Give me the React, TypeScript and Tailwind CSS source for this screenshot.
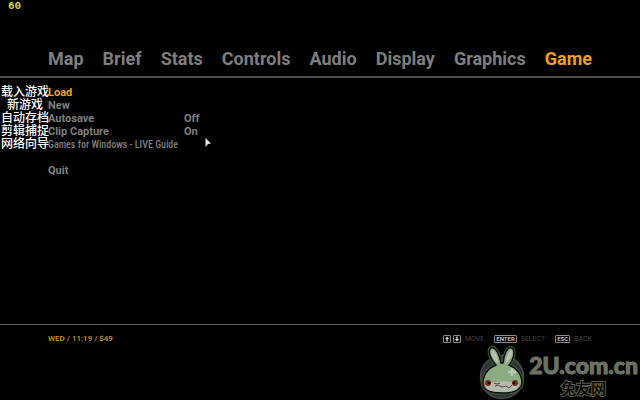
import React from "react";
import clsx from "clsx";

interface IMenuItem {
    label: string;
    note?: string;
    value?: string;
    active?: boolean;
    narrow?: boolean;
    spaced?: boolean;
}

const tabs = ["Map", "Brief", "Stats", "Controls", "Audio", "Display", "Graphics", "Game"];

const menuItems: IMenuItem[] = [
    { label: "Load", note: "载入游戏", active: true },
    { label: "New", note: "新游戏" },
    { label: "Autosave", note: "自动存档", value: "Off" },
    { label: "Clip Capture", note: "剪辑捕捉", value: "On" },
    { label: "Games for Windows - LIVE Guide", note: "网络向导", narrow: true },
    { label: "Quit", spaced: true },
];

const TabBar = () => (
    <nav className="flex justify-between border-b-2 border-[#4c4c4c] px-12 pb-[3px]">
        {tabs.map((tab) => (
            <button
                key={tab}
                type="button"
                className={clsx(
                    "font-['Roboto',sans-serif] text-[18px] leading-7 font-bold",
                    tab === "Game" ? "text-[#f0a01c]" : "text-[#7e7e7e]"
                )}
            >
                {tab}
            </button>
        ))}
    </nav>
);

const Menu = () => (
    <ul className="pt-2 font-['Roboto',sans-serif] leading-[13px]">
        {menuItems.map(({ label, note, value, active, narrow, spaced }) => (
            <li key={label} className={clsx("relative flex h-[13px] px-12", spaced && "mt-[13px]")}>
                <button
                    type="button"
                    className={clsx(
                        "flex text-left whitespace-nowrap",
                        active ? "text-[#f0a01c]" : "text-[#7e7e7e]",
                        narrow
                            ? "font-['Roboto_Condensed','Roboto',sans-serif] text-[10px] font-medium"
                            : "text-[11px] font-bold"
                    )}
                >
                    <span className={clsx(!narrow && "w-[136px]")}>{label}</span>
                    {value && <span>{value}</span>}
                </button>
                {note && (
                    <span className="pointer-events-none absolute top-0 left-0 w-[50px] text-center font-['Noto_Sans_CJK_SC',sans-serif] text-[12px] leading-[9px] font-medium whitespace-nowrap text-white">
                        {note}
                    </span>
                )}
            </li>
        ))}
    </ul>
);

const Key = ({ children }: { children: React.ReactNode }) => (
    <kbd className="flex h-2 items-center justify-center rounded-[1px] border border-[#8a8a8a] px-px font-['Roboto',sans-serif] text-[6px] leading-none font-medium text-[#dddddd]">
        {children}
    </kbd>
);

const Arrow = ({ down }: { down?: boolean }) => (
    <svg viewBox="0 0 5 6" className={clsx("h-1.5 w-1", down && "rotate-180")} aria-hidden="true">
        <path d="M2.5 0 5 3H3.3V6H1.7V3H0Z" fill="#dddddd" />
    </svg>
);

const StatusBar = () => (
    <footer className="flex h-[76px] items-start justify-between border-t border-[#5a5a5a] px-12 pt-2.5 font-['Roboto',sans-serif] text-[7px] leading-2">
        <p className="text-[8px] font-medium text-[#d0952c]">WED / 11:19 / $49</p>
        <div className="flex gap-2.5 text-[#444444]">
            <button type="button" className="flex gap-0.5">
                <Key><Arrow /></Key>
                <Key><Arrow down /></Key>
                <span className="pl-0.5">MOVE</span>
            </button>
            <button type="button" className="flex gap-1">
                <Key>ENTER</Key>
                SELECT
            </button>
            <button type="button" className="flex gap-1">
                <Key>ESC</Key>
                BACK
            </button>
        </div>
    </footer>
);

const Rabbit = () => (
    <svg viewBox="0 0 46 54" className="h-[54px] w-[46px]" aria-hidden="true">
        <circle cx="23" cy="31" r="21.5" fill="#2b3538" stroke="#474b43" strokeWidth="1.5" />
        <path
            d="M17 19C12 14 8 5 12 2c5-2 9 8 10 15h2C25 9 28 0 33 2c4 3 1 13-3 17 8 3 13 10 13 18-1 8-9 10-20 10S4 45 4 37c0-8 5-15 13-18Z"
            fill="#8cab82"
            stroke="#3f5639"
            strokeWidth="3.5"
        />
        <path
            d="M17 19C12 14 8 5 12 2c5-2 9 8 10 15h2C25 9 28 0 33 2c4 3 1 13-3 17 8 3 13 10 13 18-1 8-9 10-20 10S4 45 4 37c0-8 5-15 13-18Z"
            fill="#8cab82"
            stroke="#0d120c"
            strokeWidth="1.5"
        />
        <path d="M19 17c-5-3-8-10-6-13 4 1 6 8 6 13ZM27 17c0-6 2-12 6-13 1 4-1 10-6 13Z" fill="#b9c1b2" />
        <path d="M6 39c5-3 9-2 11-3 4-1 9-1 13 0 3 0 7 0 10 3 0 5-7 7-17 7S6 44 6 39Z" fill="#b4bbae" />
        <path d="M33 22v8M29 26h8" stroke="#bccbb5" strokeWidth="2.5" />
        <circle cx="9" cy="37" r="3" fill="#7c2621" />
        <circle cx="36" cy="37" r="3" fill="#7c2621" />
        <circle cx="10" cy="37" r="1.3" fill="#140808" />
        <circle cx="35" cy="37" r="1.3" fill="#140808" />
        <path d="M15 37l3 1 3-1M16 40l3-1 4 2 4-1 3 2 3-3" fill="none" stroke="#3a2c2a" strokeWidth="0.8" />
    </svg>
);

const Watermark = () => (
    <a href="#2u" className="absolute right-0.5 bottom-0 flex items-end">
        <Rabbit />
        <span className="flex flex-col items-center pb-0.5 pl-1">
            <span className="font-['Lato',sans-serif] text-[23px] leading-[26px] font-black text-[#6a7363] [-webkit-text-stroke:1px_#6a7363]">
                2U.com.cn
            </span>
            <span className="font-['Noto_Sans_CJK_SC',sans-serif] text-[15px] leading-5 font-medium text-black [-webkit-text-stroke:2px_#5d5d43] [paint-order:stroke_fill]">
                兔友网
            </span>
        </span>
    </a>
);

const App = () => {
    return (
        <div className="relative flex min-h-screen flex-col overflow-hidden bg-black font-['Liberation_Sans',sans-serif]">
            <p className="h-[45px] pl-2 font-['Liberation_Mono',monospace] text-[11px] leading-3 font-bold text-[#d8d832]">
                60
            </p>
            <TabBar />
            <main className="flex-1">
                <Menu />
            </main>
            <StatusBar />
            <Watermark />
            <svg viewBox="0 0 6 9" className="absolute top-[138px] left-[205px] h-[9px] w-1.5" aria-hidden="true">
                <path d="M0.5 0 6 5.5 3 6 0.5 9Z" fill="#e6e6e6" />
            </svg>
        </div>
    );
};

export default App;
